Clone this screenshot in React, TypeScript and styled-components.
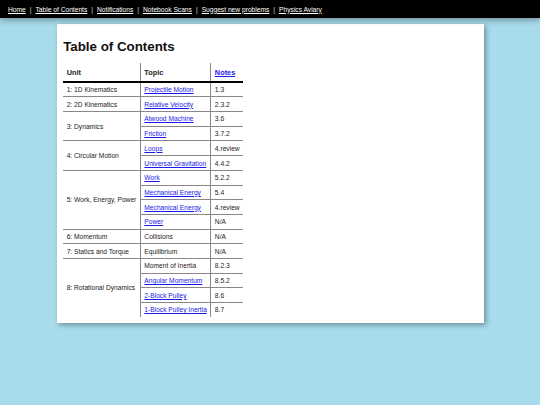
import styled, { createGlobalStyle } from "styled-components";

const GlobalStyle = createGlobalStyle`
  html, body {
    margin: 0;
    padding: 0;
    background-color: #a8dbec;
    font-family: "Liberation Sans", Arial, sans-serif;
  }
`;

const Page = styled.div`
  min-height: 405px;
  background-color: #a8dbec;
`;

const NavBar = styled.nav`
  height: 18px;
  background-color: black;
  color: white;
  display: flex;
  align-items: center;
  padding-left: 8px;
  font-size: 6.67px;
  box-shadow: 0 2px 6px rgba(0, 0, 0, 0.35);
  position: relative;
`;

const NavLink = styled.a`
  color: white;
  text-decoration: underline;
`;

const Separator = styled.span`
  margin: 0 4px;
  color: #ddd;
`;

const Card = styled.main`
  width: 427px;
  margin: 5.5px auto 0;
  padding: 6.67px;
  box-sizing: border-box;
  background-color: white;
  box-shadow: 2px 2px 5px rgba(0, 0, 0, 0.35);
`;

const Title = styled.h1`
  font-size: 13.33px;
  font-weight: bold;
  margin: 8.9px 0;
  color: #111;
`;

const Table = styled.table`
  border-collapse: collapse;
  font-size: 6.67px;
  color: #222;
`;

const HeadCell = styled.th<{ $divider?: boolean }>`
  text-align: left;
  font-weight: bold;
  font-size: 7.33px;
  padding: 4.6px 3.5px 4.2px;
  border-bottom: 2px solid black;
  border-left: ${(p) => (p.$divider ? "1px solid #888" : "none")};
`;

const Cell = styled.td<{ $divider?: boolean; $last?: boolean }>`
  padding: 3.35px 3.5px;
  white-space: nowrap;
  border-bottom: ${(p) => (p.$last ? "none" : "1px solid #888")};
  border-left: ${(p) => (p.$divider ? "1px solid #888" : "none")};
`;

const Link = styled.a`
  color: #1a1ae6;
  text-decoration: underline;
`;

type Topic = { name: string; link: boolean; notes: string };
type Unit = { unit: string; topics: Topic[] };

const units: Unit[] = [
  { unit: "1: 1D Kinematics", topics: [{ name: "Projectile Motion", link: true, notes: "1.3" }] },
  { unit: "2: 2D Kinematics", topics: [{ name: "Relative Velocity", link: true, notes: "2.3.2" }] },
  {
    unit: "3: Dynamics",
    topics: [
      { name: "Atwood Machine", link: true, notes: "3.6" },
      { name: "Friction", link: true, notes: "3.7.2" },
    ],
  },
  {
    unit: "4: Circular Motion",
    topics: [
      { name: "Loops", link: true, notes: "4.review" },
      { name: "Universal Gravitation", link: true, notes: "4.4.2" },
    ],
  },
  {
    unit: "5: Work, Energy, Power",
    topics: [
      { name: "Work", link: true, notes: "5.2.2" },
      { name: "Mechanical Energy", link: true, notes: "5.4" },
      { name: "Mechanical Energy", link: true, notes: "4.review" },
      { name: "Power", link: true, notes: "N/A" },
    ],
  },
  { unit: "6: Momentum", topics: [{ name: "Collisions", link: false, notes: "N/A" }] },
  { unit: "7: Statics and Torque", topics: [{ name: "Equilibrium", link: false, notes: "N/A" }] },
  {
    unit: "8: Rotational Dynamics",
    topics: [
      { name: "Moment of Inertia", link: false, notes: "8.2.3" },
      { name: "Angular Momentum", link: true, notes: "8.5.2" },
      { name: "2-Block Pulley", link: true, notes: "8.6" },
      { name: "1-Block Pulley Inertia", link: true, notes: "8.7" },
    ],
  },
];

const navItems = [
  "Home",
  "Table of Contents",
  "Notifications",
  "Notebook Scans",
  "Suggest new problems",
  "Physics Aviary",
];

export default function App() {
  return (
    <Page>
      <GlobalStyle />
      <NavBar>
        {navItems.map((item, i) => (
          <span key={item}>
            {i > 0 && <Separator>|</Separator>}
            <NavLink href="#">{item}</NavLink>
          </span>
        ))}
      </NavBar>
      <Card>
        <Title>Table of Contents</Title>
        <Table>
          <thead>
            <tr>
              <HeadCell>Unit</HeadCell>
              <HeadCell $divider>Topic</HeadCell>
              <HeadCell $divider>
                <Link href="#">Notes</Link>
              </HeadCell>
            </tr>
          </thead>
          <tbody>
            {units.map((u, ui) => {
              const lastUnit = ui === units.length - 1;
              return u.topics.map((t, ti) => {
                const lastRow = lastUnit && ti === u.topics.length - 1;
                return (
                  <tr key={`${ui}-${ti}`}>
                    {ti === 0 && (
                      <Cell rowSpan={u.topics.length} $last={lastUnit}>
                        {u.unit}
                      </Cell>
                    )}
                    <Cell $divider $last={lastRow}>
                      {t.link ? <Link href="#">{t.name}</Link> : t.name}
                    </Cell>
                    <Cell $divider $last={lastRow}>
                      {t.notes}
                    </Cell>
                  </tr>
                );
              });
            })}
          </tbody>
        </Table>
      </Card>
    </Page>
  );
}
